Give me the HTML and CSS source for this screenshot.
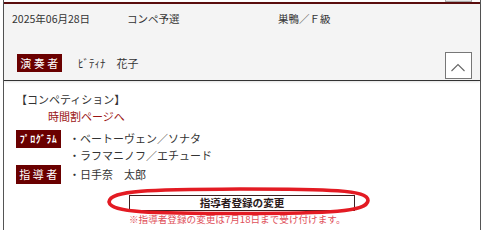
FILE: index.html
```html
<!DOCTYPE html>
<html lang="ja">
<head>
<meta charset="utf-8">
<link rel="stylesheet" href="styles.css">
</head>
<body>
<div class="prev"><div class="prev-btn"></div></div>
<div class="card">
  <div class="head">
    <div class="meta">
      <span class="date">2025年06月28日</span>
      <span class="kind">コンペ予選</span>
      <span class="place">巣鴨／Ｆ級</span>
    </div>
    <div class="head-row">
      <div class="performer">
        <span class="badge">演奏者</span>
        <span class="name">ﾋﾞﾃｨﾅ　花子</span>
      </div>
      <button class="toggle" type="button" aria-label="閉じる">
        <svg width="27" height="27" viewBox="0 0 27 27"><polyline points="6.5,19 13,12.5 19.5,19" fill="none" stroke="#666" stroke-width="1.1"/></svg>
      </button>
    </div>
  </div>
  <div class="body">
    <div class="section">【コンペティション】</div>
    <div class="link">時間割ページへ</div>
    <div class="row row-prog">
      <span class="badge badge-small">ﾌﾟﾛｸﾞﾗﾑ</span>
      <ul class="items">
        <li>・ベートーヴェン／ソナタ</li>
        <li>・ラフマニノフ／エチュード</li>
      </ul>
    </div>
    <div class="row row-teacher">
      <span class="badge">指導者</span>
      <ul class="items">
        <li>・日手奈　太郎</li>
      </ul>
    </div>
    <div class="action">
      <div class="action-inner">
        <button class="change" type="button">指導者登録の変更</button>
        <div class="note">※指導者登録の変更は7月18日まで受け付けます。</div>
      </div>
    </div>
    <svg class="circle" width="482" height="230" viewBox="0 0 482 230">
      <path d="M109,202 C110,190 150,189.5 240,189 C330,189 368,190 368,200.5 C367,212 330,213.5 240,213.5 C150,213.5 111,212.5 109,202 Z" fill="none" stroke="#e31b23" stroke-width="3.6"/>
    </svg>
  </div>
</div>
</body>
</html>
```
FILE: styles.css
```css
* { box-sizing: border-box; }
html, body { margin: 0; padding: 0; background: #fff; }
body {
  font-family: "Noto Sans CJK JP", "Noto Sans", sans-serif;
  color: #333;
  width: 482px;
  height: 230px;
  overflow: hidden;
  position: relative;
}
.prev {
  margin-left: 3px;
  width: 478px;
  height: 2px;
  border-left: 1px solid #555;
  border-right: 1px solid #555;
  display: flex;
  justify-content: flex-end;
  padding-right: 8px;
}
.prev-btn {
  width: 27px;
  height: 2px;
  background: #e6e6e6;
  border: 1px solid #aaa;
  border-top: none;
}
.card {
  margin-left: 3px;
  width: 478px;
  height: 240px;
  border-left: 1px solid #555;
  border-right: 1px solid #555;
}
.head {
  background: #f4f4f4;
  border-top: 2px solid #5a0d0d;
  border-bottom: 1px solid #333;
  height: 79px;
  box-shadow: 0 1px 2px rgba(0,0,0,0.12);
}
.meta {
  display: grid;
  grid-template-columns: 115px 151px auto;
  padding: 7px 0 0 8px;
  font-size: 10.5px;
  line-height: 16px;
  color: #333;
}
.head-row {
  margin-top: 25px;
  display: flex;
  justify-content: space-between;
  align-items: flex-start;
  padding: 0 8px 0 13px;
}
.performer {
  display: flex;
  align-items: center;
  gap: 16px;
  margin-top: 2px;
}
.badge {
  display: inline-flex;
  align-items: center;
  justify-content: center;
  width: 45px;
  height: 18px;
  background: #6a0000;
  color: #fff;
  font-size: 11px;
  letter-spacing: 2.5px;
  padding-left: 2px;
  flex: none;
}
.badge-small {
  font-size: 10px;
  letter-spacing: 0.5px;
  font-weight: bold;
  padding-left: 0;
}
.row-teacher .badge { height: 19px; }
.name {
  font-size: 11px;
  line-height: 16px;
  color: #333;
}
.toggle {
  width: 27px;
  height: 27px;
  padding: 0;
  margin: 0;
  border: 1px solid #777;
  background: #fff;
  display: flex;
  align-items: center;
  justify-content: center;
}
.toggle svg { display: block; margin: -1px; }
.body {
  position: relative;
  padding: 10px 0 0 12px;
  font-size: 11px;
  line-height: 17px;
}
.section { color: #333; }
.link {
  color: #9a1414;
  padding-left: 32px;
}
.row {
  display: flex;
  align-items: flex-start;
  gap: 8px;
}
.row-prog { margin-top: 4.5px; }
.row-teacher { margin-top: 1px; }
.items {
  list-style: none;
  margin: 0;
  padding: 0;
  color: #333;
}
.row-teacher .items { margin-top: 1px; }
.action {
  display: flex;
  justify-content: center;
  margin-top: 11.5px;
  margin-left: -12px;
}
.action-inner {
  width: 226px;
}
.change {
  display: block;
  width: 226px;
  height: 16px;
  margin: 0;
  padding: 0;
  border: 1px solid #3a2020;
  background: #fff;
  font-family: "Noto Sans CJK JP", "Noto Sans", sans-serif;
  font-weight: bold;
  font-size: 10.6px;
  line-height: 14px;
  color: #2a1a1a;
}
.note {
  margin-top: 2px;
  font-size: 9.6px;
  line-height: 12px;
  color: #e0505a;
  white-space: nowrap;
}
.circle {
  position: absolute;
  left: -4px;
  top: -81px;
  pointer-events: none;
}
```
